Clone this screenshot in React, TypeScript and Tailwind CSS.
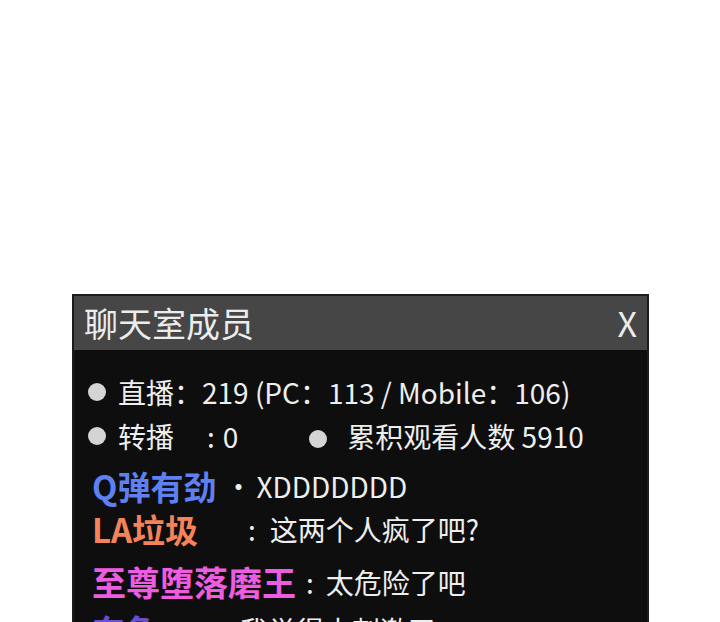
import React from 'react';

const font = { fontFamily: '"Noto Sans CJK SC", "Noto Sans", sans-serif' };

const Dot: React.FC = () => (
  <span className="inline-block w-[18px] h-[18px] rounded-full bg-[#d4d4d4] shrink-0" />
);

const messages = [
  { name: 'Q弹有劲', color: 'text-[#5f80f0]', sep: '·', sepCls: 'ml-[8px]', textCls: 'ml-[4px]', text: 'XDDDDDDD', h: 'h-[44px] mt-[6px]', size: 'text-[33px]' },
  { name: 'LA垃圾', color: 'text-[#f5835a]', sep: ':', sepCls: 'ml-[50px]', textCls: 'ml-[14px]', text: '这两个人疯了吧?', h: 'h-[42px]', size: 'text-[33px]' },
  { name: '至尊堕落磨王', color: 'text-[#ee5ce0]', sep: ':', sepCls: 'ml-[10px]', textCls: 'ml-[12px]', text: '太危险了吧', h: 'h-[44px] mt-[10px]', size: 'text-[34px]' },
  { name: '东鱼', color: 'text-[#6a4fd0]', sep: '：', sepCls: 'ml-[40px]', textCls: 'ml-[14px]', text: '我觉得太刺激了', h: 'h-[44px] mt-[4px]', size: 'text-[33px]' },
];

export default function App() {
  return (
    <div className="w-[720px] h-[622px] bg-white overflow-hidden" style={font}>
      <div className="pt-[294px] pl-[72px]">
        <div className="w-[577px] h-[400px] bg-[#0e0e0e] border-2 border-[#1c1c1c]">
          <div className="h-[54px] bg-[#464646] flex items-center justify-between pl-[10px] pr-[10px] text-[#ececec]">
            <span className="text-[34px] leading-none">聊天室成员</span>
            <span className="text-[34px] leading-none">X</span>
          </div>
          <div className="pt-[20px] pl-[14px] text-[#eeeeee] text-[28px]">
            <div className="h-[44px] flex items-center">
              <Dot />
              <span className="ml-[12px] leading-none">直播：219 (PC：113 / Mobile：106)</span>
            </div>
            <div className="h-[44px] flex items-center">
              <Dot />
              <span className="ml-[12px] w-[89px] leading-none">转播</span>
              <span className="leading-none">:</span>
              <span className="ml-[8px] leading-none">0</span>
              <span className="ml-[71px]"><Dot /></span>
              <span className="ml-[20px] leading-none">累积观看人数 5910</span>
            </div>
            {messages.map((m) => (
              <div key={m.name} className={`${m.h} flex items-center pl-[4px] whitespace-nowrap`}>
                <span className={`${m.size} ${m.color} font-semibold leading-none shrink-0`}>{m.name}</span>
                <span className={`${m.sepCls} leading-none shrink-0`}>{m.sep}</span>
                <span className={`${m.textCls} leading-none shrink-0`}>{m.text}</span>
              </div>
            ))}
          </div>
        </div>
      </div>
    </div>
  );
}
